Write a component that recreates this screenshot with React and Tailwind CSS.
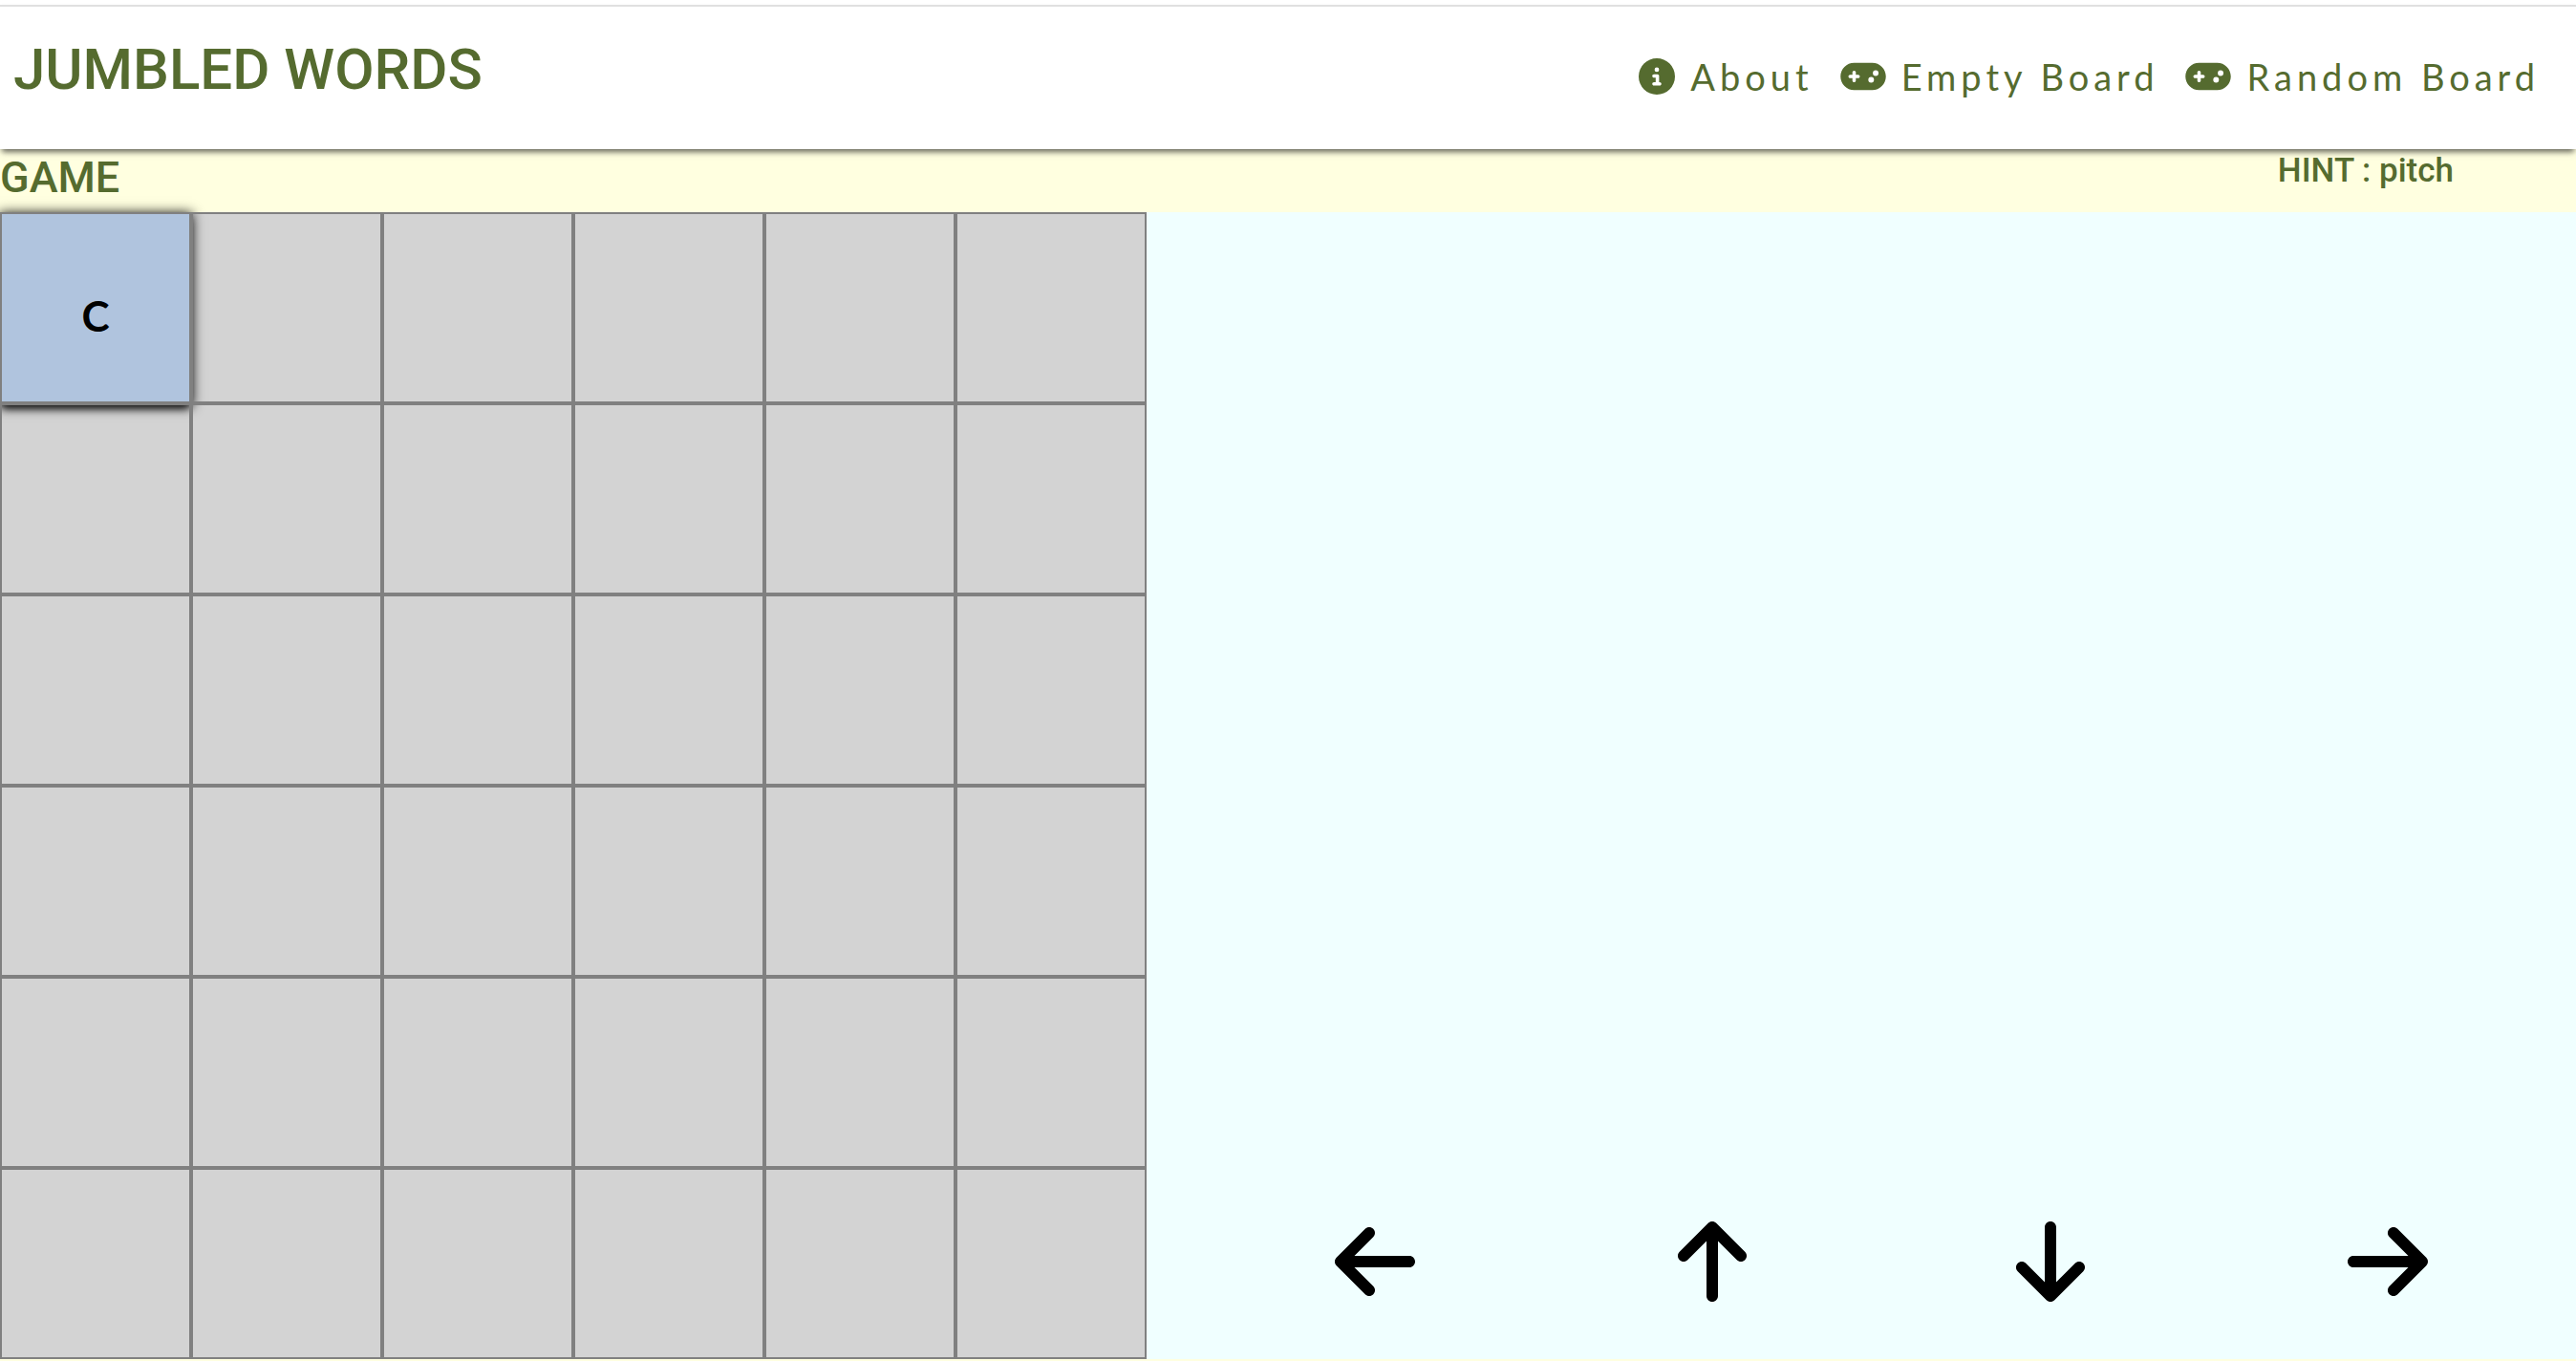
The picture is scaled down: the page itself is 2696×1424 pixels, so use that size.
import { FaCircleInfo, FaGamepad, FaArrowLeft, FaArrowUp, FaArrowDown, FaArrowRight } from "react-icons/fa6";

const links = [
  { label: "About", Icon: FaCircleInfo, width: "w-[38px]" },
  { label: "Empty Board", Icon: FaGamepad, width: "w-12" },
  { label: "Random Board", Icon: FaGamepad, width: "w-12" },
];
const arrows = [
  { label: "Move left", Icon: FaArrowLeft },
  { label: "Move up", Icon: FaArrowUp },
  { label: "Move down", Icon: FaArrowDown },
  { label: "Move right", Icon: FaArrowRight },
];
const cells = ["C", ...Array(35).fill("")];

export default function App() {
  return (
    <div className="min-h-screen bg-[#ffffe0] font-['Roboto',sans-serif] font-medium text-[#556b2f]">
      <div className="bg-white pt-[5px]">
        <header className="relative flex items-start justify-between border-t-2 border-[#e0e0e0] bg-white pt-[18px] pr-[38px] pb-[35px] pl-[14px] shadow-[0_5px_6px_-2px_rgba(0,0,0,0.6)]">
          <h1 className="text-[60px] leading-24 font-medium">JUMBLED WORDS</h1>
          <nav className="flex gap-7 pt-[26px]">
            {links.map(({ label, Icon, width }) => (
              <a
                key={label}
                href="#"
                className="flex items-center gap-4 font-['Lato',sans-serif] text-[38px] leading-[58px] font-normal tracking-[5px]"
              >
                <Icon className={`h-[38px] ${width}`} />
                {label}
              </a>
            ))}
          </nav>
        </header>
      </div>
      <div className="flex h-[66px] items-start justify-between pr-32">
        <h2 className="text-[45px] leading-[60px]">GAME</h2>
        <p className="text-[35px] leading-[46px]">HINT : pitch</p>
      </div>
      <main className="flex bg-[#f0ffff]">
        <div className="grid shrink-0 grid-cols-[repeat(6,200px)] bg-[#d3d3d3] text-black">
          {cells.map((letter, i) => (
            <div
              key={i}
              className={`flex aspect-square items-center justify-center border-2 border-[#808080] pt-4 font-['Lato',sans-serif] text-[44px] font-bold ${
                letter ? "bg-[#b0c4de] shadow-[0_2px_12px_1px_#000,0_8px_8px_-3px_rgba(0,0,0,0.7)]" : ""
              }`}
            >
              {letter}
            </div>
          ))}
        </div>
        <div className="flex grow items-end justify-around pr-5 pb-[54px] pl-[62px] text-8xl text-black">
          {arrows.map(({ label, Icon }) => (
            <button key={label} type="button" aria-label={label}>
              <Icon />
            </button>
          ))}
        </div>
      </main>
    </div>
  );
}
